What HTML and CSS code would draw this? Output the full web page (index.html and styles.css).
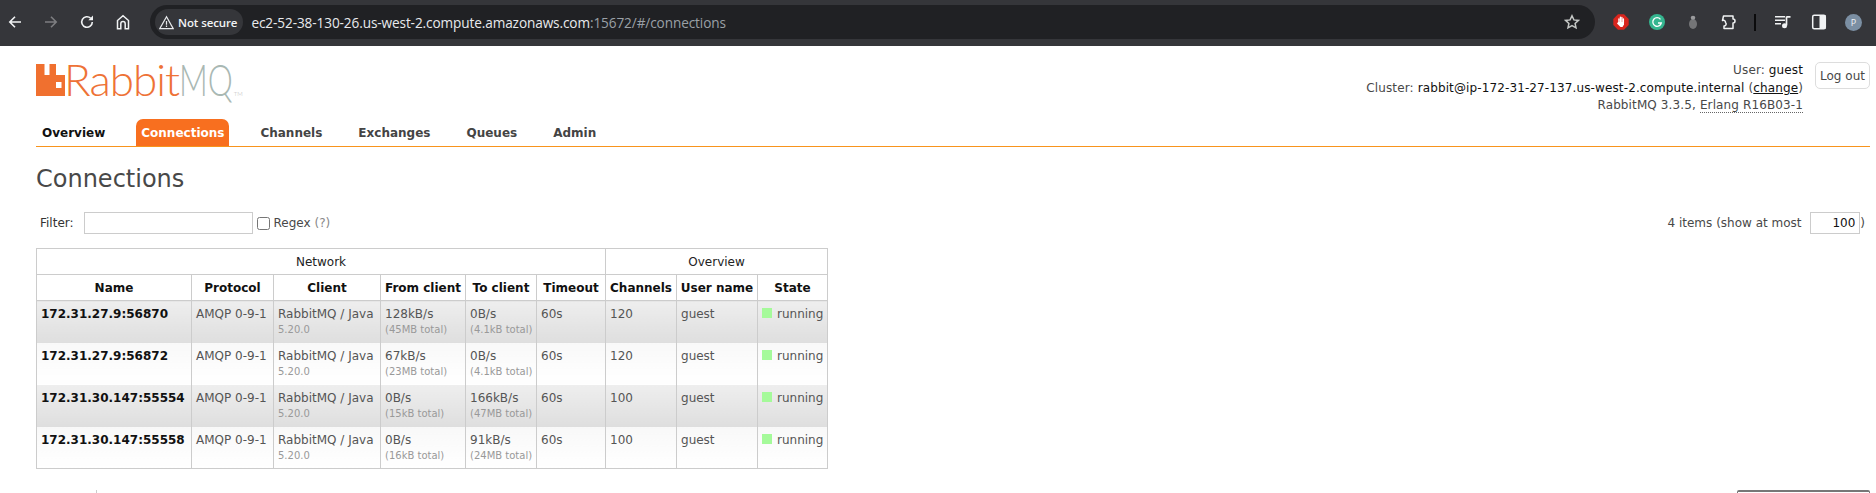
FILE: index.html
```html
<!DOCTYPE html>
<html lang="en">
<head>
    <meta charset="UTF-8">
    <title>RabbitMQ Management</title>
    <link rel="stylesheet" href="styles.css">
</head>
<body>
    <div class="toolbar">
        <svg class="tool-icon" viewBox="0 0 16 16"><path d="M14 8H3M8 2.800 2.800 8 8 13.200" fill="none" stroke="#f1f3f4" stroke-width="1.600"/></svg>
        <svg class="tool-icon" viewBox="0 0 16 16"><path d="M2 8h11M8 2.800 13.200 8 8 13.200" fill="none" stroke="#7d7e81" stroke-width="1.600"/></svg>
        <svg class="tool-icon" viewBox="0 0 16 16"><path d="M13.300 8a5.300 5.300 0 1 1-1.600-3.800" fill="none" stroke="#f1f3f4" stroke-width="1.600"/><path d="M14 1.500v4.700H9.300z" fill="#f1f3f4"/></svg>
        <svg class="tool-icon" viewBox="0 0 16 16"><path d="M2.500 14.800V6.500L8 1.800l5.500 4.700v8.300h-3.300V9.800a2.200 2.200 0 0 0-4.400 0v5z" fill="none" stroke="#f1f3f4" stroke-width="1.500"/></svg>
        <div class="omnibox">
            <div class="security">
                <svg class="warn" viewBox="0 0 16 16"><path d="M8 1.800.8 14.500h14.400zM8 6.300v4.200M8 11.300v1.500" fill="none" stroke="#e8eaed" stroke-width="1.300"/></svg>
                <span>Not secure</span>
            </div>
            <div class="url">ec2-52-38-130-26.us-west-2.compute.amazonaws.com<span class="url-dim">:15672/#/connections</span></div>
            <svg class="star" viewBox="0 0 16 16"><path d="m8 1.800 1.900 4.100 4.500.5-3.300 3 .9 4.400L8 11.600l-4 2.200.9-4.400-3.300-3 4.500-.5z" fill="none" stroke="#c4c7c5" stroke-width="1.500"/></svg>
        </div>
        <div class="extensions">
            <svg class="ext" viewBox="0 0 16 16"><path d="M5 .3h6L15.700 5v6L11 15.700H5L.3 11V5z" fill="#d9251d"/><path d="M5.900 9V5M7.400 8V3.200M8.900 8V3.500M10.400 9V5" fill="none" stroke="#fff" stroke-width="1.300" stroke-linecap="round"/><path d="M5.300 8h5.700v2.500L9.500 13H7.500L4 9.500l.5-.7z" fill="#fff"/></svg>
            <svg class="ext" viewBox="0 0 16 16"><circle cx="8" cy="8" r="8" fill="#35b58f"/><path d="M11.500 5.300A4.300 4.300 0 1 0 12.300 9H9" fill="none" stroke="#fff" stroke-width="1.300"/></svg>
            <svg class="ext" viewBox="0 0 16 16"><ellipse cx="8" cy="10" rx="4" ry="5" fill="#747577"/><ellipse cx="8" cy="3.800" rx="2.300" ry="2" fill="#9a9b9d"/></svg>
            <svg class="ext" viewBox="0 0 16 16"><path d="M2.500 2h9.500v3a2 2 0 0 1 0 4v5.500H3v-2.500a2 2 0 0 0 1.500-3.500A2 2 0 0 0 1.500 6.500z" fill="none" stroke="#f1f3f4" stroke-width="1.500" stroke-linejoin="round"/></svg>
            <div class="divider"></div>
            <svg class="ext music" viewBox="0 0 16 16"><path d="M0 2.800h10M0 6.300h10M0 9.800h6" stroke="#f1f3f4" stroke-width="1.500"/><path d="M11.500 2.500V11.500M11.500 2.800H15.500" stroke="#f1f3f4" stroke-width="1.700"/><circle cx="9.500" cy="11.800" r="2.500" fill="#f1f3f4"/></svg>
            <svg class="ext" viewBox="0 0 16 16"><rect x="1.700" y="1.200" width="12.600" height="13.600" rx="1.500" fill="none" stroke="#f1f3f4" stroke-width="1.500"/><rect x="8.500" y="1" width="6" height="14" fill="#f1f3f4"/></svg>
            <div class="avatar">P</div>
        </div>
    </div>

    <div class="page">
        <div class="header">
            <div class="logo">
                <svg class="logo-mark" viewBox="0 0 29 32"><path d="M0 0h8.500v11h5V0h6.500v11H29v21H0zM20 18v6h5.500v-6z" fill="#f0702f" fill-rule="evenodd"/></svg>
                <span class="logo-rabbit">Rabbit</span><span class="logo-mq">MQ</span><span class="logo-tm">TM</span>
            </div>
            <div class="login">
                <div class="login-info">
                    <p>User: <b>guest</b></p>
                    <p>Cluster: <b>rabbit@ip-172-31-27-137.us-west-2.compute.internal</b> (<a href="#">change</a>)</p>
                    <p>RabbitMQ 3.3.5, <abbr>Erlang R16B03-1</abbr></p>
                </div>
                <button class="logout">Log out</button>
            </div>
        </div>

        <div class="menu">
            <a href="#" class="menu-item dark">Overview</a>
            <a href="#" class="menu-item selected">Connections</a>
            <a href="#" class="menu-item">Channels</a>
            <a href="#" class="menu-item">Exchanges</a>
            <a href="#" class="menu-item">Queues</a>
            <a href="#" class="menu-item">Admin</a>
        </div>

        <h1>Connections</h1>

        <div class="filter-row">
            <div class="filter">
                <label class="filter-label">Filter:</label>
                <input class="filter-input" type="text">
                <input class="regex-check" type="checkbox">
                <span class="regex-label">Regex <span class="help">(?)</span></span>
            </div>
            <div class="updatable">4 items (show at most <input class="limit" type="text" value="100">)</div>
        </div>

        <table class="list">
            <colgroup>
                <col class="col-name"><col class="col-protocol"><col class="col-client"><col class="col-from"><col class="col-to"><col class="col-timeout"><col class="col-channels"><col class="col-user"><col class="col-state">
            </colgroup>
            <thead>
                <tr class="group-row">
                    <th colspan="6">Network</th>
                    <th colspan="3">Overview</th>
                </tr>
                <tr class="head-row">
                    <th>Name</th><th>Protocol</th><th>Client</th><th>From client</th><th>To client</th><th>Timeout</th><th>Channels</th><th>User name</th><th>State</th>
                </tr>
            </thead>
            <tbody id="rows"></tbody>
        </table>

        <div class="footer">
            <div class="footer-tick"></div>
            <div class="footer-box"></div>
        </div>
    </div>

    <script>
        const connections = [
            { name: "172.31.27.9:56870", from: "128kB/s", fromTotal: "45MB", to: "0B/s", toTotal: "4.1kB", channels: 120 },
            { name: "172.31.27.9:56872", from: "67kB/s", fromTotal: "23MB", to: "0B/s", toTotal: "4.1kB", channels: 120 },
            { name: "172.31.30.147:55554", from: "0B/s", fromTotal: "15kB", to: "166kB/s", toTotal: "47MB", channels: 100 },
            { name: "172.31.30.147:55558", from: "0B/s", fromTotal: "16kB", to: "91kB/s", toTotal: "24MB", channels: 100 }
        ];

        const rows = document.getElementById('rows');

        connections.forEach((conn, i) => {
            const row = document.createElement('tr');
            row.className = i % 2 === 0 ? 'alt1' : 'alt2';
            row.innerHTML = `
                <td class="conn-name">${conn.name}</td>
                <td>AMQP 0-9-1</td>
                <td>RabbitMQ / Java<sub>5.20.0</sub></td>
                <td>${conn.from}<sub>(${conn.fromTotal} total)</sub></td>
                <td>${conn.to}<sub>(${conn.toTotal} total)</sub></td>
                <td>60s</td>
                <td>${conn.channels}</td>
                <td>guest</td>
                <td><span class="state-dot"></span>running</td>
            `;
            rows.appendChild(row);
        });
    </script>
</body>
</html>
```

FILE: styles.css
```css
* {
    box-sizing: border-box;
}

html, body {
    height: 100%;
    overflow: hidden;
}

body {
    margin: 0;
    background: white;
    color: #484848;
    font: 12px "DejaVu Sans", Verdana, sans-serif;
}

/* browser chrome */
.toolbar {
    display: flex;
    align-items: center;
    height: 46px;
    padding: 0 0 2px 7px;
    background: #35363a;
}

.tool-icon {
    width: 16px;
    height: 16px;
    margin-right: 20px;
    flex: none;
}

.omnibox {
    display: flex;
    align-items: center;
    width: 1445px;
    height: 34px;
    margin-left: -1px;
    padding: 0 15px 0 5px;
    border-radius: 17px;
    background: #202124;
}

.security {
    display: flex;
    align-items: center;
    gap: 4px;
    height: 26px;
    padding: 0 6px 0 4px;
    border-radius: 13px;
    background: #35363a;
    color: #f1f3f4;
    font: 600 11.5px "Open Sans", sans-serif;
    letter-spacing: -0.1px;
}

.warn {
    width: 15px;
    height: 15px;
}

.url {
    flex: 1;
    margin-left: 8px;
    color: #e8eaed;
    font: 13.6px "Open Sans", sans-serif;
    letter-spacing: -0.1px;
}

.url-dim {
    color: #9aa0a6;
}

.star {
    width: 16px;
    height: 16px;
}

.extensions {
    display: flex;
    align-items: center;
    gap: 20px;
    margin-left: 18px;
}

.ext {
    width: 16px;
    height: 16px;
    flex: none;
}

.divider {
    width: 2px;
    height: 17px;
    margin: 0 -1px 0 -3px;
    background: #0b0b0c;
}

.avatar {
    width: 17px;
    height: 17px;
    margin-left: -2px;
    border-radius: 50%;
    background: #7b8fa3;
    color: #eef1f4;
    font: 9px/17px "Open Sans", sans-serif;
    text-align: center;
}

/* page */
.page {
    padding: 0 6px 0 36px;
}

.header {
    display: flex;
    justify-content: space-between;
    height: 73px;
    padding-top: 15px;
}

.logo {
    display: flex;
    align-items: baseline;
    height: 37px;
    font: 300 44px/37px "Lato", sans-serif;
    white-space: nowrap;
}

.logo-mark {
    width: 29px;
    height: 32px;
    margin-right: -1px;
}

.logo-rabbit {
    color: #ee7236;
    letter-spacing: -1px;
}

.logo-mq {
    display: inline-block;
    margin-right: -20px;
    color: #a9b8b3;
    transform: scaleX(0.72);
    transform-origin: left;
}

.logo-tm {
    font-size: 6px;
    line-height: 10px;
    color: #b5b5b5;
}

.login {
    display: flex;
    align-items: flex-start;
}

.login-info {
    margin-top: 1px;
    text-align: right;
    letter-spacing: 0.12px;
    line-height: 17.500px;
}

.login-info p {
    margin: 0;
}

.login-info b {
    font-weight: normal;
    color: #111;
}

.login-info a {
    color: #111;
}

.login-info abbr {
    border-bottom: 1px dotted #666;
}

.logout {
    width: 55px;
    height: 27px;
    margin: 1px 0 0 12px;
    padding: 0;
    border: 1px solid #ddd;
    border-radius: 5px;
    background: white;
    color: #484848;
    font: 12px "DejaVu Sans", sans-serif;
}

.menu {
    display: flex;
    height: 28px;
    padding-left: 1px;
    border-bottom: 1px solid #f8941d;
}

.menu-item {
    height: 27px;
    margin-right: 26px;
    padding: 0 5px;
    border-radius: 7px 7px 0 0;
    color: #444;
    font-weight: bold;
    line-height: 28px;
    text-decoration: none;
}

.menu-item.dark {
    color: #111;
}

.menu-item.selected {
    background: #f86f1f;
    color: white;
}

h1 {
    margin: 17px 0 0;
    color: #484848;
    font-size: 24px;
    font-weight: normal;
    line-height: 30px;
}

.filter-row {
    display: flex;
    justify-content: space-between;
    align-items: center;
    height: 22px;
    margin-top: 18px;
    padding-right: 5px;
}

.filter {
    display: flex;
    align-items: center;
    padding-left: 4px;
}

.filter-label {
    color: #333;
}

.filter-input {
    width: 169px;
    height: 22px;
    margin: 0 0 0 10px;
    border: 1px solid #ccc;
}

.regex-check {
    width: 13px;
    height: 13px;
    margin: 0 4px 0 4px;
}

.help {
    color: #888;
}

.updatable {
    display: flex;
    align-items: center;
    white-space: pre;
}

.limit {
    width: 50px;
    height: 22px;
    margin-left: 5px;
    padding: 0 4px;
    border: 1px solid #ccc;
    color: #111;
    font: 12px "DejaVu Sans", sans-serif;
    text-align: right;
}

/* connections table */
.list {
    width: 791px;
    margin-top: 14px;
    table-layout: fixed;
    border-collapse: collapse;
    border: 1px solid #ccc;
}

.col-name { width: 155px; }
.col-protocol { width: 82px; }
.col-client { width: 107px; }
.col-from { width: 85px; }
.col-to { width: 71px; }
.col-timeout { width: 69px; }
.col-channels { width: 71px; }
.col-user { width: 81px; }
.col-state { width: 70px; }

.list th, .list td {
    border: 1px solid #ccc;
    overflow: hidden;
    white-space: nowrap;
}

.list th {
    height: 26px;
    padding: 0;
    color: #111;
    text-align: center;
}

.group-row th {
    font-weight: normal;
    color: #222;
}

.list td {
    height: 42px;
    padding: 6px 4px 0;
    border-top: 0;
    border-bottom: 0;
    color: #555;
    line-height: 14px;
    vertical-align: top;
}

.alt1 td {
    background: linear-gradient(#eeeeee, #dedede);
}

.alt2 td {
    background: linear-gradient(#f8f8f8, #ffffff);
}

.list td.conn-name {
    color: #111;
    font-weight: bold;
}

.list sub {
    display: block;
    margin-top: 3px;
    color: #999;
    font-size: 10px;
    line-height: 12px;
    vertical-align: baseline;
}

.state-dot {
    display: inline-block;
    width: 10px;
    height: 10px;
    margin-right: 5px;
    background: #a5fa9a;
}

.footer {
    display: flex;
    justify-content: space-between;
    height: 10px;
    margin: 21px 0 0 60px;
}

.footer-tick {
    width: 1px;
    height: 10px;
    background: #ccc;
}

.footer-box {
    width: 133px;
    height: 10px;
    border: 1px solid #777;
    border-top-width: 2px;
    border-radius: 2px;
}
```
